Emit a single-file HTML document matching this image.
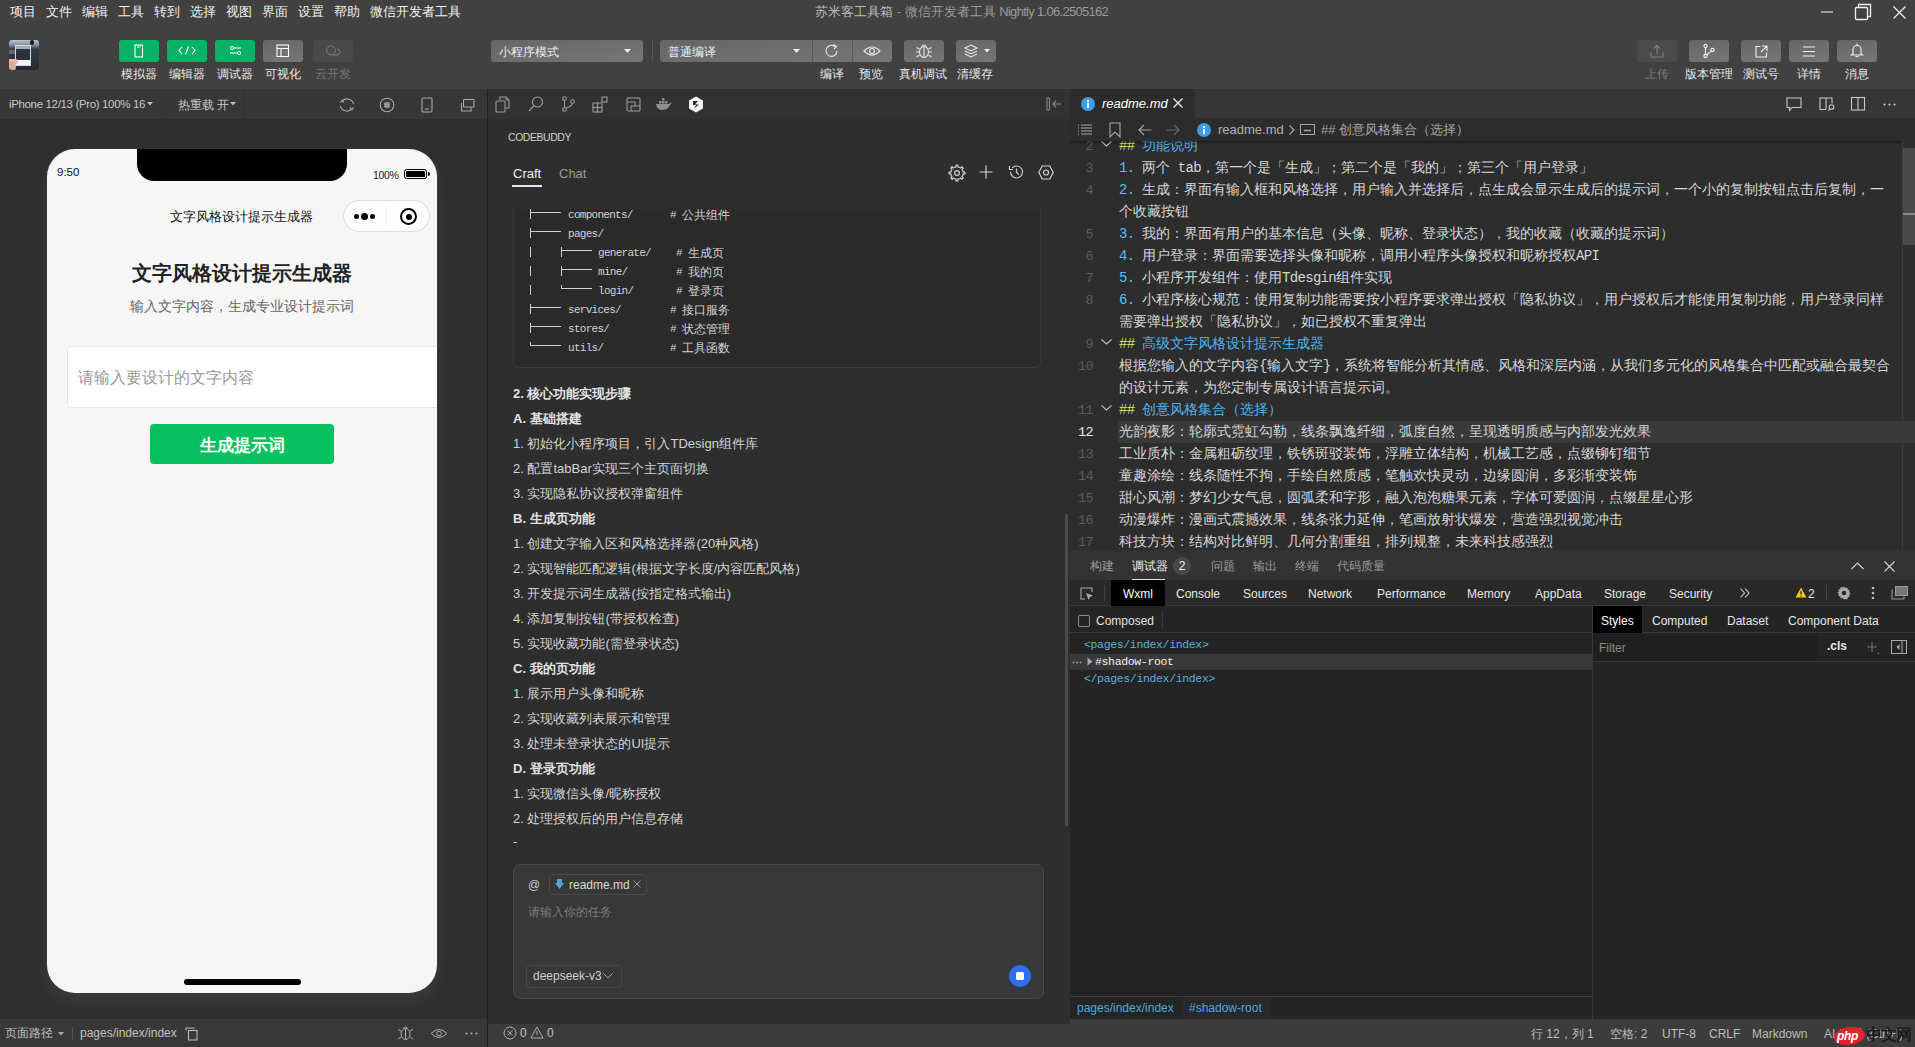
<!DOCTYPE html>
<html><head><meta charset="utf-8">
<style>
*{box-sizing:border-box;margin:0;padding:0}
html,body{width:1915px;height:1047px;overflow:hidden;background:#2e2e2e;font-family:"Liberation Sans",sans-serif;color:#ccc}
.a{position:absolute}
.t{position:absolute;white-space:pre;line-height:1}
svg{position:absolute;overflow:visible}
/* regions */
#top{left:0;top:0;width:1915px;height:89px;background:#414141}
#simbar{left:0;top:89px;width:487px;height:30px;background:#373737}
#sim{left:0;top:119px;width:487px;height:900px;background:#2f2f2f}
#simfoot{left:0;top:1019px;width:487px;height:28px;background:#383838}
#vdiv1{left:487px;top:89px;width:1px;height:958px;background:#1e1e1e}
#cb{left:488px;top:89px;width:582px;height:935px;background:#2e2e2e}
#cbicons{left:488px;top:89px;width:582px;height:30px;background:#323232}
#cbstatus{left:488px;top:1024px;width:582px;height:23px;background:#3b3b3b}
#edtabs{left:1070px;top:89px;width:845px;height:29px;background:#363636}
#edcrumb{left:1070px;top:118px;width:845px;height:23px;background:#2c2c2c}
#ed{left:1070px;top:141px;width:845px;height:409px;background:#2d2d2d}
#dbhead{left:1070px;top:550px;width:845px;height:30px;background:#333}
#dt{left:1070px;top:580px;width:845px;height:439px;background:#242424}
#status{left:1070px;top:1019px;width:845px;height:28px;background:#3c3c3c}
</style></head><body>
<div class="a" id="top"></div>
<div class="a" id="simbar"></div>
<div class="a" id="sim"></div>
<div class="a" id="simfoot"></div>
<div class="a" id="cb"></div>
<div class="a" id="cbicons"></div>
<div class="a" id="cbstatus"></div>
<div class="a" id="vdiv1"></div>
<div class="a" id="edtabs"></div>
<div class="a" id="edcrumb"></div>
<div class="a" id="ed"></div>
<div class="a" id="dbhead"></div>
<div class="a" id="dt"></div>
<div class="a" id="status"></div>
<!-- menu -->
<div class="t" style="left:10px;top:5px;font-size:13px;color:#f0f0f0;word-spacing:0">项目</div>
<div class="t" style="left:46px;top:5px;font-size:13px;color:#f0f0f0">文件</div>
<div class="t" style="left:82px;top:5px;font-size:13px;color:#f0f0f0">编辑</div>
<div class="t" style="left:118px;top:5px;font-size:13px;color:#f0f0f0">工具</div>
<div class="t" style="left:154px;top:5px;font-size:13px;color:#f0f0f0">转到</div>
<div class="t" style="left:190px;top:5px;font-size:13px;color:#f0f0f0">选择</div>
<div class="t" style="left:226px;top:5px;font-size:13px;color:#f0f0f0">视图</div>
<div class="t" style="left:262px;top:5px;font-size:13px;color:#f0f0f0">界面</div>
<div class="t" style="left:298px;top:5px;font-size:13px;color:#f0f0f0">设置</div>
<div class="t" style="left:334px;top:5px;font-size:13px;color:#f0f0f0">帮助</div>
<div class="t" style="left:370px;top:5px;font-size:13px;color:#f0f0f0">微信开发者工具</div>
<div class="t" style="left:815px;top:5px;font-size:13px;color:#bdbdbd">苏米客工具箱 <span style="color:#8f8f8f">-</span> <span style="color:#9a9a9a">微信开发者工具 <span style="letter-spacing:-0.7px">Nightly 1.06.2505162</span></span></div>
<!-- window controls -->
<svg style="left:1821px;top:5px" width="14" height="14"><line x1="0" y1="7" x2="12" y2="7" stroke="#ddd" stroke-width="1.2"/></svg>
<svg style="left:1855px;top:4px" width="17" height="17"><rect x="0.5" y="3.5" width="12" height="12" fill="none" stroke="#eee" stroke-width="1.3" rx="1"/><path d="M3.5 3.5V0.5H15.5V12.5H12.5" fill="none" stroke="#eee" stroke-width="1.3"/></svg>
<svg style="left:1893px;top:6px" width="13" height="13"><path d="M0.5 0.5L12.5 12.5M12.5 0.5L0.5 12.5" stroke="#eee" stroke-width="1.3"/></svg>
<!-- avatar -->
<div class="a" style="left:9px;top:40px;width:30px;height:30px;border-radius:3px;overflow:hidden;background:linear-gradient(#b8c5d2 0%,#8592a0 16%,#343b48 30%,#242834 100%)">
 <div class="a" style="left:0;top:10px;width:7px;height:4px;background:#5e6976"></div>
 <div class="a" style="left:21px;top:0px;width:4px;height:5px;border-radius:2px;background:#1a1a1a"></div>
 <div class="a" style="left:6px;top:5px;width:16px;height:21px;background:#d6d8da"></div>
 <div class="a" style="left:7px;top:6px;width:14px;height:3px;background:#a3aebb"></div>
 <div class="a" style="left:7px;top:9px;width:14px;height:11px;background:#2a303c"></div>
 <div class="a" style="left:7px;top:20px;width:14px;height:5px;background:#f2f2f2"></div>
 <div class="a" style="left:-2px;top:19px;width:11px;height:5px;border-radius:3px;background:#e8b8ae"></div><div class="a" style="left:-2px;top:22px;width:9px;height:9px;border-radius:4px;background:#dba89e"></div>
</div>
<!-- green buttons -->
<div class="a" style="left:119px;top:40px;width:40px;height:22px;border-radius:3px;background:#07b266"></div>
<div class="a" style="left:167px;top:40px;width:40px;height:22px;border-radius:3px;background:#07b266"></div>
<div class="a" style="left:215px;top:40px;width:40px;height:22px;border-radius:3px;background:#07b266"></div>
<div class="a" style="left:263px;top:40px;width:40px;height:22px;border-radius:3px;background:linear-gradient(170deg,#666 0%,#767676 100%)"></div>
<div class="a" style="left:313px;top:40px;width:40px;height:22px;border-radius:3px;background:#4a4a4a"></div>
<svg style="left:134px;top:44px" width="10" height="14"><rect x="1" y="1" width="7.5" height="12" fill="none" stroke="#fff" stroke-width="1.1"/><line x1="3" y1="3" x2="6.5" y2="3" stroke="#fff" stroke-width="1"/></svg>
<svg style="left:178px;top:45px" width="18" height="12"><path d="M4 2L1 5.5L4 9M14 2L17 5.5L14 9M10.5 1.5L7.5 9.5" fill="none" stroke="#fff" stroke-width="1.1"/></svg>
<svg style="left:229px;top:45px" width="13" height="12"><line x1="2" y1="3" x2="12" y2="3" stroke="#fff" stroke-width="1"/><circle cx="3" cy="3" r="1.6" fill="#07b266" stroke="#fff" stroke-width="1"/><line x1="1" y1="8" x2="11" y2="8" stroke="#fff" stroke-width="1"/><circle cx="10" cy="8" r="1.6" fill="#07b266" stroke="#fff" stroke-width="1"/></svg>
<svg style="left:276px;top:44px" width="14" height="14"><rect x="1" y="1" width="11.5" height="11.5" fill="none" stroke="#fff" stroke-width="1.1"/><line x1="1" y1="4.5" x2="12.5" y2="4.5" stroke="#fff" stroke-width="1.1"/><line x1="5" y1="4.5" x2="5" y2="12.5" stroke="#fff" stroke-width="1.1"/></svg>
<svg style="left:325px;top:45px" width="16" height="12"><circle cx="6" cy="5.5" r="4.5" fill="none" stroke="#7a7a7a" stroke-width="1"/><path d="M7 10h5a3 3 0 0 0 0-6" fill="none" stroke="#7a7a7a" stroke-width="1"/></svg>
<div class="t" style="left:121px;top:68px;font-size:12px;color:#e6e6e6">模拟器</div>
<div class="t" style="left:169px;top:68px;font-size:12px;color:#e6e6e6">编辑器</div>
<div class="t" style="left:217px;top:68px;font-size:12px;color:#e6e6e6">调试器</div>
<div class="t" style="left:265px;top:68px;font-size:12px;color:#e6e6e6">可视化</div>
<div class="t" style="left:315px;top:68px;font-size:12px;color:#777">云开发</div>
<!-- mode dropdowns -->
<div class="a" style="left:491px;top:40px;width:152px;height:22px;border-radius:3px;background:linear-gradient(170deg,#666 0%,#767676 100%)"></div>
<div class="t" style="left:499px;top:46px;font-size:12px;color:#eee">小程序模式</div>
<svg style="left:624px;top:49px" width="7" height="4"><path d="M0 0H7L3.5 4Z" fill="#eee"/></svg>
<div class="a" style="left:652px;top:40px;width:1px;height:22px;background:#555"></div>
<div class="a" style="left:660px;top:40px;width:232px;height:22px;border-radius:3px;background:linear-gradient(170deg,#666 0%,#767676 100%)"></div>
<div class="a" style="left:812px;top:40px;width:1px;height:22px;background:#5a5a5a"></div>
<div class="a" style="left:852px;top:40px;width:1px;height:22px;background:#5a5a5a"></div>
<div class="t" style="left:668px;top:46px;font-size:12px;color:#eee">普通编译</div>
<svg style="left:793px;top:49px" width="7" height="4"><path d="M0 0H7L3.5 4Z" fill="#eee"/></svg>
<svg style="left:824px;top:43px" width="16" height="16"><path d="M13 8A5.5 5.5 0 1 1 11 3.6" fill="none" stroke="#e8e8e8" stroke-width="1.1"/><path d="M9.5 1.5L12.5 3.5L10 6" fill="none" stroke="#e8e8e8" stroke-width="1.1"/></svg>
<svg style="left:863px;top:45px" width="18" height="12"><path d="M1 6Q9 -2 17 6Q9 14 1 6Z" fill="none" stroke="#e8e8e8" stroke-width="1.1"/><circle cx="9" cy="6" r="2.5" fill="none" stroke="#e8e8e8" stroke-width="1.1"/></svg>
<div class="a" style="left:904px;top:40px;width:40px;height:22px;border-radius:3px;background:linear-gradient(170deg,#666 0%,#767676 100%)"></div>
<svg style="left:915px;top:43px" width="18" height="16"><ellipse cx="9" cy="9" rx="4.5" ry="5.5" fill="none" stroke="#e8e8e8" stroke-width="1.1"/><line x1="9" y1="4" x2="9" y2="14.5" stroke="#e8e8e8" stroke-width="1.1"/><path d="M6.5 3.5Q9 0.5 11.5 3.5M4.5 6L1.5 4.5M13.5 6L16.5 4.5M4.5 9H1M13.5 9H17M4.5 12L1.5 14M13.5 12L16.5 14" fill="none" stroke="#e8e8e8" stroke-width="1.1"/></svg>
<div class="a" style="left:956px;top:40px;width:40px;height:22px;border-radius:3px;background:linear-gradient(170deg,#666 0%,#767676 100%)"></div>
<svg style="left:964px;top:44px" width="16" height="14"><path d="M7 1L13 4L7 7L1 4Z M1 7L7 10L13 7 M1 10L7 13L13 10" fill="none" stroke="#e8e8e8" stroke-width="1.1"/></svg>
<svg style="left:984px;top:49px" width="6" height="4"><path d="M0 0H6L3 3.5Z" fill="#eee"/></svg>
<div class="t" style="left:820px;top:68px;font-size:12px;color:#e6e6e6">编译</div>
<div class="t" style="left:859px;top:68px;font-size:12px;color:#e6e6e6">预览</div>
<div class="t" style="left:899px;top:68px;font-size:12px;color:#e6e6e6">真机调试</div>
<div class="t" style="left:957px;top:68px;font-size:12px;color:#e6e6e6">清缓存</div>
<!-- right buttons -->
<div class="a" style="left:1637px;top:40px;width:40px;height:22px;border-radius:3px;background:#4b4b4b"></div>
<div class="a" style="left:1689px;top:40px;width:40px;height:22px;border-radius:3px;background:linear-gradient(170deg,#666 0%,#767676 100%)"></div>
<div class="a" style="left:1741px;top:40px;width:40px;height:22px;border-radius:3px;background:linear-gradient(170deg,#666 0%,#767676 100%)"></div>
<div class="a" style="left:1789px;top:40px;width:40px;height:22px;border-radius:3px;background:linear-gradient(170deg,#666 0%,#767676 100%)"></div>
<div class="a" style="left:1837px;top:40px;width:40px;height:22px;border-radius:3px;background:linear-gradient(170deg,#666 0%,#767676 100%)"></div>
<svg style="left:1650px;top:44px" width="14" height="14"><path d="M1 8V13H13V8M7 10V1.5M4 4.5L7 1.5L10 4.5" fill="none" stroke="#7d7d7d" stroke-width="1.1"/></svg>
<svg style="left:1703px;top:44px" width="12" height="14"><circle cx="2.5" cy="2" r="1.6" fill="none" stroke="#f0f0f0" stroke-width="1.1"/><circle cx="2.5" cy="12" r="1.6" fill="none" stroke="#f0f0f0" stroke-width="1.1"/><circle cx="9.5" cy="6" r="1.6" fill="none" stroke="#f0f0f0" stroke-width="1.1"/><path d="M2.5 3.6V10.4M8.2 7L3.8 11" fill="none" stroke="#f0f0f0" stroke-width="1.1"/></svg>
<svg style="left:1755px;top:45px" width="13" height="13"><path d="M5.5 1.5H1V12H11.5V7.5M7 1H12V6M12 1L6 7" fill="none" stroke="#f0f0f0" stroke-width="1.1"/></svg>
<svg style="left:1803px;top:46px" width="12" height="11"><path d="M0 1H12M0 5.5H12M0 10H12" stroke="#f0f0f0" stroke-width="1.1"/></svg>
<svg style="left:1851px;top:43px" width="12" height="15"><path d="M2 11V6.5A4 4 0 0 1 10 6.5V11L11.5 12H0.5Z" fill="none" stroke="#f0f0f0" stroke-width="1.1"/><path d="M6 0.5V2.5M4.5 13.5H7.5" stroke="#f0f0f0" stroke-width="1.2"/></svg>
<div class="t" style="left:1645px;top:68px;font-size:12px;color:#7a7a7a">上传</div>
<div class="t" style="left:1685px;top:68px;font-size:12px;color:#e6e6e6">版本管理</div>
<div class="t" style="left:1743px;top:68px;font-size:12px;color:#e6e6e6">测试号</div>
<div class="t" style="left:1797px;top:68px;font-size:12px;color:#e6e6e6">详情</div>
<div class="t" style="left:1845px;top:68px;font-size:12px;color:#e6e6e6">消息</div>

<!-- sim toolbar -->
<div class="t" style="left:9px;top:99px;font-size:11.5px;letter-spacing:-0.35px;color:#c8c8c8">iPhone 12/13 (Pro) 100% 16</div>
<svg style="left:147px;top:102px" width="6" height="4"><path d="M0 0H6L3 3.5Z" fill="#bbb"/></svg>
<div class="a" style="left:166px;top:89px;width:1px;height:30px;background:#333"></div>
<div class="t" style="left:178px;top:99px;font-size:12px;color:#c8c8c8">热重载<span style="margin-left:3px;font-size:11.5px">开</span></div>
<svg style="left:230px;top:102px" width="6" height="4"><path d="M0 0H6L3 3.5Z" fill="#bbb"/></svg>
<div class="a" style="left:244px;top:89px;width:1px;height:30px;background:#333"></div>
<svg style="left:339px;top:97px" width="16" height="16"><path d="M3.2 4.2A6.6 6.6 0 0 1 14.6 7.2M12.8 11.8A6.6 6.6 0 0 1 1.4 8.8" fill="none" stroke="#aaa" stroke-width="1.1"/><path d="M1.5 5.8L3.2 3.2L5 5.6M14.5 10.2L12.8 12.8L11 10.4" fill="none" stroke="#aaa" stroke-width="1.1"/></svg>
<svg style="left:379px;top:97px" width="16" height="16"><circle cx="8" cy="8" r="6.8" fill="none" stroke="#aaa" stroke-width="1.1"/><rect x="5.2" y="5.2" width="5.6" height="5.6" rx="0.8" fill="#999"/></svg>
<svg style="left:421px;top:97px" width="12" height="16"><rect x="1" y="1" width="10" height="14" rx="1.2" fill="none" stroke="#aaa" stroke-width="1.1"/><line x1="4" y1="12" x2="8" y2="12" stroke="#aaa" stroke-width="1.1"/></svg>
<svg style="left:459px;top:98px" width="17" height="14"><rect x="4.5" y="1.5" width="10.5" height="7.5" rx="0.5" fill="none" stroke="#aaa" stroke-width="1.1"/><path d="M2.5 5V13H12V9.5" fill="none" stroke="#aaa" stroke-width="1.1"/></svg>
<!-- phone -->
<div class="a" style="left:47px;top:149px;width:390px;height:844px;background:#f6f6f6;border-radius:28px;box-shadow:0 0 2px rgba(255,255,255,0.1),0 9px 16px rgba(255,255,255,0.06);overflow:hidden">
  <div class="a" style="left:90px;top:0;width:210px;height:32px;background:#000;border-radius:0 0 17px 17px"></div>
  <div class="t" style="left:10px;top:18px;font-size:11.5px;color:#111">9:50</div>
  <div class="t" style="left:326px;top:21px;font-size:10.5px;color:#222;letter-spacing:-0.3px">100%</div>
  <div class="a" style="left:357px;top:20px;width:23px;height:10px;border:1.2px solid #000;border-radius:2.5px;padding:1px"><div style="width:100%;height:100%;background:#000;border-radius:1px"></div></div>
  <div class="a" style="left:381px;top:23px;width:2px;height:4px;background:#000;border-radius:0 2px 2px 0"></div>
  <!-- nav -->
  <div class="t" style="left:123px;top:61px;font-size:13px;color:#111">文字风格设计提示生成器</div>
  <div class="a" style="left:296px;top:51px;width:87px;height:32px;border:1px solid #dcdcdc;border-radius:16px;background:#fdfdfd"></div>
  <div class="a" style="left:339px;top:58px;width:1px;height:18px;background:#eee"></div>
  <div class="a" style="left:307px;top:65px;width:5px;height:5px;border-radius:50%;background:#000"></div>
  <div class="a" style="left:314px;top:64px;width:7px;height:7px;border-radius:50%;background:#000"></div>
  <div class="a" style="left:323px;top:65px;width:5px;height:5px;border-radius:50%;background:#000"></div>
  <div class="a" style="left:353px;top:59px;width:17px;height:17px;border-radius:50%;border:2.2px solid #000"></div>
  <div class="a" style="left:358.5px;top:64.5px;width:6px;height:6px;border-radius:50%;background:#000"></div>
  <!-- content -->
  <div class="t" style="left:0;width:390px;text-align:center;top:114px;font-size:20px;font-weight:bold;color:#222">文字风格设计提示生成器</div>
  <div class="t" style="left:0;width:390px;text-align:center;top:150px;font-size:14px;color:#666">输入文字内容，生成专业设计提示词</div>
  <div class="a" style="left:20px;top:197px;width:400px;height:62px;background:#fff;border:1px solid #e6e6e6;border-radius:4px"></div>
  <div class="t" style="left:31px;top:221px;font-size:16px;color:#999">请输入要设计的文字内容</div>
  <div class="a" style="left:103px;top:275px;width:184px;height:40px;background:#07c160;border-radius:4px"></div>
  <div class="t" style="left:103px;width:184px;text-align:center;top:288px;font-size:17px;font-weight:bold;color:#fff">生成提示词</div>
  <div class="a" style="left:137px;top:830px;width:117px;height:6px;background:#000;border-radius:3px"></div>
</div>
<!-- sim footer -->
<div class="t" style="left:5px;top:1027px;font-size:12px;color:#c0c0c0">页面路径</div>
<svg style="left:58px;top:1032px" width="6" height="4"><path d="M0 0H6L3 3.5Z" fill="#aaa"/></svg>
<div class="a" style="left:72px;top:1027px;width:1px;height:13px;background:#555"></div>
<div class="t" style="left:80px;top:1027px;font-size:12px;color:#c0c0c0">pages/index/index</div>
<svg style="left:185px;top:1027px" width="13" height="14"><path d="M1 3.5V1H9.5" fill="none" stroke="#bbb" stroke-width="1.1"/><rect x="3.5" y="3.5" width="8.5" height="9.5" fill="none" stroke="#bbb" stroke-width="1.1"/></svg>
<svg style="left:397px;top:1025px" width="17" height="16"><ellipse cx="8.5" cy="9" rx="4.5" ry="5.5" fill="none" stroke="#aaa" stroke-width="1"/><line x1="8.5" y1="4" x2="8.5" y2="14.5" stroke="#aaa" stroke-width="1"/><path d="M6 3.5Q8.5 0.5 11 3.5M4 6L1 4.5M13 6L16 4.5M4 12L1 14M13 12L16 14" fill="none" stroke="#aaa" stroke-width="1"/></svg>
<svg style="left:430px;top:1028px" width="18" height="11"><path d="M1 5.5Q9 -2.5 17 5.5Q9 13.5 1 5.5Z" fill="none" stroke="#aaa" stroke-width="1"/><circle cx="9" cy="5.5" r="2.3" fill="none" stroke="#aaa" stroke-width="1"/></svg>
<svg style="left:465px;top:1032px" width="14" height="4"><circle cx="1.5" cy="1.5" r="1.1" fill="#aaa"/><circle cx="6.5" cy="1.5" r="1.1" fill="#aaa"/><circle cx="11.5" cy="1.5" r="1.1" fill="#aaa"/></svg>

<!-- activity icons -->
<svg style="left:495px;top:96px" width="16" height="17"><path d="M5 4V1H11L14 4V12H10" fill="none" stroke="#9a9a9a" stroke-width="1.1"/><path d="M11 1V4H14" fill="none" stroke="#9a9a9a" stroke-width="1"/><rect x="1" y="5" width="9" height="11" rx="1" fill="none" stroke="#9a9a9a" stroke-width="1.1"/></svg>
<svg style="left:528px;top:96px" width="16" height="16"><circle cx="9.5" cy="6" r="5" fill="none" stroke="#9a9a9a" stroke-width="1.1"/><line x1="6" y1="9.5" x2="1" y2="15" stroke="#9a9a9a" stroke-width="1.2"/></svg>
<svg style="left:561px;top:96px" width="15" height="16"><circle cx="3.5" cy="2.5" r="1.8" fill="none" stroke="#9a9a9a" stroke-width="1.1"/><circle cx="3.5" cy="13.5" r="1.8" fill="none" stroke="#9a9a9a" stroke-width="1.1"/><circle cx="11.5" cy="5.5" r="1.8" fill="none" stroke="#9a9a9a" stroke-width="1.1"/><path d="M3.5 4.3V11.7M11.5 7.3Q11 10 5 12" fill="none" stroke="#9a9a9a" stroke-width="1.1"/></svg>
<svg style="left:592px;top:96px" width="17" height="17"><rect x="1" y="7" width="4.5" height="4.5" fill="none" stroke="#9a9a9a" stroke-width="1.1"/><rect x="5.5" y="7" width="4.5" height="4.5" fill="none" stroke="#9a9a9a" stroke-width="1.1"/><rect x="1" y="11.5" width="4.5" height="4.5" fill="none" stroke="#9a9a9a" stroke-width="1.1"/><rect x="5.5" y="11.5" width="4.5" height="4.5" fill="none" stroke="#9a9a9a" stroke-width="1.1"/><rect x="10" y="1" width="5" height="5" fill="none" stroke="#9a9a9a" stroke-width="1.1"/></svg>
<svg style="left:626px;top:97px" width="15" height="15"><rect x="1" y="1" width="13" height="13" rx="1" fill="none" stroke="#9a9a9a" stroke-width="1.1"/><path d="M1 5H9V9H14M5 14V9H9" fill="none" stroke="#9a9a9a" stroke-width="1.1"/></svg>
<svg style="left:655px;top:97px" width="18" height="14"><path d="M1 7H14Q15.5 5 17 6Q15.5 7 15 8Q13 13 7 13Q2 13 1 7Z" fill="#8f8f8f"/><rect x="4" y="4" width="2.5" height="2.5" fill="#8f8f8f"/><rect x="7" y="4" width="2.5" height="2.5" fill="#8f8f8f"/><rect x="10" y="4" width="2.5" height="2.5" fill="#8f8f8f"/><rect x="7" y="1" width="2.5" height="2.5" fill="#8f8f8f"/></svg>
<svg style="left:688px;top:96px" width="16" height="17"><path d="M8 0.5L15 4.5V12.5L8 16.5L1 12.5V4.5Z" fill="#f2f2f2"/><path d="M5 5H10L7 8.5H11L6 12.5L8 9H5Z" fill="#2c2c2c"/></svg>
<svg style="left:1046px;top:97px" width="16" height="14"><rect x="1" y="1" width="2.5" height="12" fill="none" stroke="#8a8a8a" stroke-width="1"/><path d="M15 7H7M10 4L7 7L10 10" fill="none" stroke="#8a8a8a" stroke-width="1.2"/></svg>
<!-- header -->
<div class="t" style="left:508px;top:132px;font-size:10.5px;letter-spacing:-0.45px;color:#cfcfcf">CODEBUDDY</div>
<div class="t" style="left:513px;top:167px;font-size:13px;color:#f0f0f0">Craft</div>
<div class="a" style="left:512px;top:185px;width:30px;height:2px;background:#e8e8e8"></div>
<div class="t" style="left:559px;top:167px;font-size:13px;color:#9a9a9a">Chat</div>
<svg style="left:948px;top:164px" width="18" height="18"><path d="M14.93 7.18 L15.13 8.08 L16.94 8.05 L16.94 9.95 L15.13 9.92 L14.93 10.82 L14.48 11.90 L13.99 12.68 L15.29 13.94 L13.94 15.29 L12.68 13.99 L11.90 14.48 L10.82 14.93 L9.92 15.13 L9.95 16.94 L8.05 16.94 L8.08 15.13 L7.18 14.93 L6.10 14.48 L5.32 13.99 L4.06 15.29 L2.71 13.94 L4.01 12.68 L3.52 11.90 L3.07 10.82 L2.87 9.92 L1.06 9.95 L1.06 8.05 L2.87 8.08 L3.07 7.18 L3.52 6.10 L4.01 5.32 L2.71 4.06 L4.06 2.71 L5.32 4.01 L6.10 3.52 L7.18 3.07 L8.08 2.87 L8.05 1.06 L9.95 1.06 L9.92 2.87 L10.82 3.07 L11.90 3.52 L12.68 4.01 L13.94 2.71 L15.29 4.06 L13.99 5.32 L14.48 6.10Z" fill="none" stroke="#d0d0d0" stroke-width="1.2" stroke-linejoin="round"/><circle cx="9" cy="9" r="2.4" fill="none" stroke="#d0d0d0" stroke-width="1.2"/></svg>
<svg style="left:979px;top:165px" width="14" height="14"><path d="M7 0.5V13.5M0.5 7H13.5" stroke="#d0d0d0" stroke-width="1.2"/></svg>
<svg style="left:1008px;top:164px" width="16" height="16"><path d="M2.5 8A6 6 0 1 0 4.2 3.8" fill="none" stroke="#c8c8c8" stroke-width="1.2"/><path d="M1.5 2V5.5H5" fill="none" stroke="#c8c8c8" stroke-width="1.2"/><path d="M8.5 4.5V8.5L11 10.5" fill="none" stroke="#c8c8c8" stroke-width="1.2"/></svg>
<svg style="left:1038px;top:165px" width="16" height="15"><path d="M4.2 1H11.8L15.2 7.5L11.8 14H4.2L0.8 7.5Z" fill="none" stroke="#d0d0d0" stroke-width="1.2"/><circle cx="8" cy="7.5" r="2.5" fill="none" stroke="#d0d0d0" stroke-width="1.2"/></svg>
<!-- code block -->
<div class="a" style="left:513px;top:205px;width:528px;height:163px;background:#2a2a2a;border:1px solid #383838;border-top:none;border-radius:0 0 6px 6px"></div>
<div class="a" style="left:488px;top:196px;width:576px;height:13px;background:#2e2e2e"></div>
<div style="position:absolute;left:0;top:0;font-family:'Liberation Mono',monospace;font-size:11px;color:#d2d2d2">
<div class="a" style="left:530px;top:209px;width:1px;height:10px;background:#cfcfcf"></div>
<div class="a" style="left:530px;top:212px;width:31px;height:1px;background:#cfcfcf"></div>
<div class="t" style="left:568px;top:210px;letter-spacing:-0.72px">components/</div>
<div class="t" style="left:670px;top:210px">#</div>
<div class="t" style="left:682px;top:210px;font-family:'Liberation Sans',sans-serif;font-size:11.5px">公共组件</div>
<div class="a" style="left:530px;top:228px;width:1px;height:10px;background:#cfcfcf"></div>
<div class="a" style="left:530px;top:231px;width:31px;height:1px;background:#cfcfcf"></div>
<div class="t" style="left:568px;top:229px;letter-spacing:-0.72px">pages/</div>
<div class="a" style="left:530px;top:247px;width:1px;height:10px;background:#cfcfcf"></div>
<div class="a" style="left:561px;top:247px;width:1px;height:10px;background:#cfcfcf"></div>
<div class="a" style="left:561px;top:250px;width:31px;height:1px;background:#cfcfcf"></div>
<div class="t" style="left:598px;top:248px;letter-spacing:-0.72px">generate/</div>
<div class="t" style="left:676px;top:248px">#</div>
<div class="t" style="left:688px;top:248px;font-family:'Liberation Sans',sans-serif;font-size:11.5px">生成页</div>
<div class="a" style="left:530px;top:266px;width:1px;height:10px;background:#cfcfcf"></div>
<div class="a" style="left:561px;top:266px;width:1px;height:10px;background:#cfcfcf"></div>
<div class="a" style="left:561px;top:269px;width:31px;height:1px;background:#cfcfcf"></div>
<div class="t" style="left:598px;top:267px;letter-spacing:-0.72px">mine/</div>
<div class="t" style="left:676px;top:267px">#</div>
<div class="t" style="left:688px;top:267px;font-family:'Liberation Sans',sans-serif;font-size:11.5px">我的页</div>
<div class="a" style="left:530px;top:285px;width:1px;height:10px;background:#cfcfcf"></div>
<div class="a" style="left:561px;top:285px;width:1px;height:4px;background:#cfcfcf"></div>
<div class="a" style="left:561px;top:288px;width:31px;height:1px;background:#cfcfcf"></div>
<div class="t" style="left:598px;top:286px;letter-spacing:-0.72px">login/</div>
<div class="t" style="left:676px;top:286px">#</div>
<div class="t" style="left:688px;top:286px;font-family:'Liberation Sans',sans-serif;font-size:11.5px">登录页</div>
<div class="a" style="left:530px;top:304px;width:1px;height:10px;background:#cfcfcf"></div>
<div class="a" style="left:530px;top:307px;width:31px;height:1px;background:#cfcfcf"></div>
<div class="t" style="left:568px;top:305px;letter-spacing:-0.72px">services/</div>
<div class="t" style="left:670px;top:305px">#</div>
<div class="t" style="left:682px;top:305px;font-family:'Liberation Sans',sans-serif;font-size:11.5px">接口服务</div>
<div class="a" style="left:530px;top:323px;width:1px;height:10px;background:#cfcfcf"></div>
<div class="a" style="left:530px;top:326px;width:31px;height:1px;background:#cfcfcf"></div>
<div class="t" style="left:568px;top:324px;letter-spacing:-0.72px">stores/</div>
<div class="t" style="left:670px;top:324px">#</div>
<div class="t" style="left:682px;top:324px;font-family:'Liberation Sans',sans-serif;font-size:11.5px">状态管理</div>
<div class="a" style="left:530px;top:342px;width:1px;height:4px;background:#cfcfcf"></div>
<div class="a" style="left:530px;top:345px;width:31px;height:1px;background:#cfcfcf"></div>
<div class="t" style="left:568px;top:343px;letter-spacing:-0.72px">utils/</div>
<div class="t" style="left:670px;top:343px">#</div>
<div class="t" style="left:682px;top:343px;font-family:'Liberation Sans',sans-serif;font-size:11.5px">工具函数</div>
</div>
<!-- markdown -->
<div style="position:absolute;left:0;top:1px;font-size:13px;color:#d4d4d4">
<div class="t" style="left:513px;top:386px;font-weight:bold;color:#e2e2e2">2. 核心功能实现步骤</div>
<div class="t" style="left:513px;top:411px;font-weight:bold;color:#e2e2e2">A. 基础搭建</div>
<div class="t" style="left:513px;top:436px">1. 初始化小程序项目，引入TDesign组件库</div>
<div class="t" style="left:513px;top:461px">2. 配置tabBar实现三个主页面切换</div>
<div class="t" style="left:513px;top:486px">3. 实现隐私协议授权弹窗组件</div>
<div class="t" style="left:513px;top:511px;font-weight:bold;color:#e2e2e2">B. 生成页功能</div>
<div class="t" style="left:513px;top:536px">1. 创建文字输入区和风格选择器(20种风格)</div>
<div class="t" style="left:513px;top:561px">2. 实现智能匹配逻辑(根据文字长度/内容匹配风格)</div>
<div class="t" style="left:513px;top:586px">3. 开发提示词生成器(按指定格式输出)</div>
<div class="t" style="left:513px;top:611px">4. 添加复制按钮(带授权检查)</div>
<div class="t" style="left:513px;top:636px">5. 实现收藏功能(需登录状态)</div>
<div class="t" style="left:513px;top:661px;font-weight:bold;color:#e2e2e2">C. 我的页功能</div>
<div class="t" style="left:513px;top:686px">1. 展示用户头像和昵称</div>
<div class="t" style="left:513px;top:711px">2. 实现收藏列表展示和管理</div>
<div class="t" style="left:513px;top:736px">3. 处理未登录状态的UI提示</div>
<div class="t" style="left:513px;top:761px;font-weight:bold;color:#e2e2e2">D. 登录页功能</div>
<div class="t" style="left:513px;top:786px">1. 实现微信头像/昵称授权</div>
<div class="t" style="left:513px;top:811px">2. 处理授权后的用户信息存储</div>
<div class="t" style="left:513px;top:834px">-</div>
</div>
<!-- scrollbar -->
<div class="a" style="left:1065px;top:514px;width:3px;height:312px;background:#4a4a4a"></div>
<!-- input box -->
<div class="a" style="left:513px;top:864px;width:531px;height:135px;background:#383838;border:1px solid #474747;border-radius:7px"></div>
<div class="t" style="left:528px;top:879px;font-size:12px;color:#c8c8c8">@</div>
<div class="a" style="left:549px;top:874px;width:98px;height:21px;border:1px solid #4a4a4a;border-radius:4px"></div>
<svg style="left:555px;top:879px" width="9" height="11"><path d="M2 0H7V4H9L4.5 10L0 4H2Z" fill="#4aa3df"/></svg>
<div class="t" style="left:569px;top:879px;font-size:12px;color:#d8d8d8">readme.md</div>
<svg style="left:633px;top:880px" width="8" height="8"><path d="M0.5 0.5L7.5 7.5M7.5 0.5L0.5 7.5" stroke="#999" stroke-width="1"/></svg>
<div class="t" style="left:528px;top:906px;font-size:12px;color:#7c7c7c">请输入你的任务</div>
<div class="a" style="left:526px;top:965px;width:96px;height:23px;border:1px solid #474747;border-radius:4px"></div>
<div class="t" style="left:533px;top:970px;font-size:12px;color:#cfcfcf">deepseek-v3</div>
<svg style="left:603px;top:973px" width="10" height="6"><path d="M0.5 0.5L5 5L9.5 0.5" fill="none" stroke="#aaa" stroke-width="1"/></svg>
<div class="a" style="left:1009px;top:965px;width:22px;height:22px;border-radius:50%;background:#2f6ff0"></div>
<div class="a" style="left:1016px;top:972px;width:8px;height:8px;border-radius:1.5px;background:#fff"></div>
<!-- status -->
<svg style="left:503px;top:1026px" width="14" height="14"><circle cx="7" cy="7" r="6" fill="none" stroke="#aaa" stroke-width="1"/><path d="M4.5 4.5L9.5 9.5M9.5 4.5L4.5 9.5" stroke="#aaa" stroke-width="1"/></svg>
<div class="t" style="left:520px;top:1027px;font-size:12px;color:#c0c0c0">0</div>
<svg style="left:530px;top:1026px" width="14" height="13"><path d="M7 1L13 12H1Z" fill="none" stroke="#aaa" stroke-width="1"/><path d="M7 5V9" stroke="#aaa" stroke-width="1"/></svg>
<div class="t" style="left:547px;top:1027px;font-size:12px;color:#c0c0c0">0</div>

<!-- editor tab -->
<div class="a" style="left:1070px;top:89px;width:125px;height:29px;background:#2c2c2c"></div>
<div class="a" style="left:1081px;top:97px;width:14px;height:14px;border-radius:50%;background:#3d9ee8"></div>
<div class="a" style="left:1087px;top:100px;width:2px;height:2px;background:#fff"></div>
<div class="a" style="left:1087px;top:103px;width:2px;height:5px;background:#fff"></div>
<div class="t" style="left:1102px;top:97px;font-size:13px;font-style:italic;color:#fff">readme.md</div>
<svg style="left:1173px;top:98px" width="10" height="10"><path d="M0.5 0.5L9.5 9.5M9.5 0.5L0.5 9.5" stroke="#eee" stroke-width="1.3"/></svg>
<!-- tab bar actions -->
<svg style="left:1786px;top:97px" width="16" height="15"><path d="M1 1H15V10.5H6L3.5 13.5V10.5H1Z" fill="none" stroke="#c8c8c8" stroke-width="1.1"/></svg>
<svg style="left:1819px;top:97px" width="17" height="15"><path d="M7 12.5H1V1H13V6.5" fill="none" stroke="#c8c8c8" stroke-width="1.1"/><line x1="7" y1="1" x2="7" y2="12.5" stroke="#c8c8c8" stroke-width="1.1"/><circle cx="12.5" cy="10" r="2.3" fill="none" stroke="#c8c8c8" stroke-width="1.1"/><line x1="11" y1="11.8" x2="9" y2="14" stroke="#c8c8c8" stroke-width="1.1"/></svg>
<svg style="left:1851px;top:97px" width="14" height="14"><rect x="0.5" y="0.5" width="13" height="12.5" fill="none" stroke="#c8c8c8" stroke-width="1.1"/><line x1="7" y1="0.5" x2="7" y2="13" stroke="#c8c8c8" stroke-width="1.1"/></svg>
<svg style="left:1883px;top:103px" width="14" height="3"><circle cx="1.5" cy="1.5" r="1.1" fill="#c8c8c8"/><circle cx="6.5" cy="1.5" r="1.1" fill="#c8c8c8"/><circle cx="11.5" cy="1.5" r="1.1" fill="#c8c8c8"/></svg>
<!-- breadcrumb -->
<svg style="left:1077px;top:123px" width="16" height="14"><path d="M4 2H15M4 5H15M4 8H15M4 11H15" stroke="#a8a8a8" stroke-width="1"/><path d="M1 2H2M1 5H2M1 8H2M1 11H2" stroke="#a8a8a8" stroke-width="1"/></svg>
<svg style="left:1109px;top:122px" width="12" height="16"><path d="M1 1H11V15L6 10L1 15Z" fill="none" stroke="#a8a8a8" stroke-width="1.1"/></svg>
<svg style="left:1138px;top:124px" width="14" height="12"><path d="M13.5 6H1M6 1L1 6L6 11" fill="none" stroke="#a8a8a8" stroke-width="1.1"/></svg>
<svg style="left:1166px;top:124px" width="14" height="12"><path d="M0.5 6H13M8 1L13 6L8 11" fill="none" stroke="#6a6a6a" stroke-width="1.1"/></svg>
<div class="a" style="left:1197px;top:123px;width:14px;height:14px;border-radius:50%;background:#3d9ee8"></div>
<div class="a" style="left:1203px;top:126px;width:2px;height:2px;background:#fff"></div>
<div class="a" style="left:1203px;top:129px;width:2px;height:5px;background:#fff"></div>
<div class="t" style="left:1218px;top:123px;font-size:13px;color:#b0b0b0">readme.md</div>
<svg style="left:1289px;top:125px" width="6" height="10"><path d="M0.5 0.5L5 5L0.5 9.5" fill="none" stroke="#b0b0b0" stroke-width="1.1"/></svg>
<svg style="left:1300px;top:124px" width="15" height="11"><rect x="0.5" y="0.5" width="14" height="10" fill="none" stroke="#a8a8a8" stroke-width="1"/><path d="M4 6.5H11" stroke="#a8a8a8" stroke-width="1.5"/></svg>
<div class="t" style="left:1321px;top:123px;font-size:13px;color:#a8a8a8">## 创意风格集合（选择）</div>
<!-- content -->
<div class="a" style="left:1070px;top:141px;width:832px;height:409px;overflow:hidden">
<style>
.ln{position:absolute;width:23px;text-align:right;left:0;padding-top:2px;font-family:"Liberation Mono",monospace;font-size:13.5px;letter-spacing:-0.6px;color:#5c5c5c;line-height:22px;height:22px}
.lc{position:absolute;left:49px;white-space:pre;font-size:14px;color:#d6d6d6;line-height:22px;height:22px}
.m{font-family:"Liberation Mono",monospace;letter-spacing:-0.7px}
.hh{color:#c6dc5f;font-family:"Liberation Mono",monospace;letter-spacing:-0.7px}
.hd{color:#4db4f0}
.nu{color:#4fc1f7;font-family:"Liberation Mono",monospace;letter-spacing:-0.7px}
</style>
<div class="a" style="left:48px;top:280px;width:784px;height:22px;background:#3a3a3a"></div>
<div class="ln" style="top:-7px">2</div><div class="lc" style="top:-7px"><span class="hh">## </span><span class="hd">功能说明</span></div>
<div class="ln" style="top:15px">3</div><div class="lc" style="top:15px"><span class="nu">1. </span>两个<span class="m"> tab</span>，第一个是「生成」；第二个是「我的」；第三个「用户登录」</div>
<div class="ln" style="top:37px">4</div><div class="lc" style="top:37px"><span class="nu">2. </span>生成：界面有输入框和风格选择，用户输入并选择后，点生成会显示生成后的提示词，一个小的复制按钮点击后复制，一</div>
<div class="lc" style="top:59px">个收藏按钮</div>
<div class="ln" style="top:81px">5</div><div class="lc" style="top:81px"><span class="nu">3. </span>我的：界面有用户的基本信息（头像、昵称、登录状态），我的收藏（收藏的提示词）</div>
<div class="ln" style="top:103px">6</div><div class="lc" style="top:103px"><span class="nu">4. </span>用户登录：界面需要选择头像和昵称，调用小程序头像授权和昵称授权<span class="m">API</span></div>
<div class="ln" style="top:125px">7</div><div class="lc" style="top:125px"><span class="nu">5. </span>小程序开发组件：使用<span class="m">Tdesgin</span>组件实现</div>
<div class="ln" style="top:147px">8</div><div class="lc" style="top:147px"><span class="nu">6. </span>小程序核心规范：使用复制功能需要按小程序要求弹出授权「隐私协议」，用户授权后才能使用复制功能，用户登录同样</div>
<div class="lc" style="top:169px">需要弹出授权「隐私协议」，如已授权不重复弹出</div>
<div class="ln" style="top:191px">9</div><div class="lc" style="top:191px"><span class="hh">## </span><span class="hd">高级文字风格设计提示生成器</span></div>
<div class="ln" style="top:213px">10</div><div class="lc" style="top:213px">根据您输入的文字内容<span class="m">{</span>输入文字<span class="m">}</span>，系统将智能分析其情感、风格和深层内涵，从我们多元化的风格集合中匹配或融合最契合</div>
<div class="lc" style="top:235px">的设计元素，为您定制专属设计语言提示词。</div>
<div class="ln" style="top:257px">11</div><div class="lc" style="top:257px"><span class="hh">## </span><span class="hd">创意风格集合（选择）</span></div>
<div class="ln" style="top:279px;color:#e8e8e8">12</div><div class="lc" style="top:279px">光韵夜影：轮廓式霓虹勾勒，线条飘逸纤细，弧度自然，呈现透明质感与内部发光效果</div>
<div class="ln" style="top:301px">13</div><div class="lc" style="top:301px">工业质朴：金属粗砺纹理，铁锈斑驳装饰，浮雕立体结构，机械工艺感，点缀铆钉细节</div>
<div class="ln" style="top:323px">14</div><div class="lc" style="top:323px">童趣涂绘：线条随性不拘，手绘自然质感，笔触欢快灵动，边缘圆润，多彩渐变装饰</div>
<div class="ln" style="top:345px">15</div><div class="lc" style="top:345px">甜心风潮：梦幻少女气息，圆弧柔和字形，融入泡泡糖果元素，字体可爱圆润，点缀星星心形</div>
<div class="ln" style="top:367px">16</div><div class="lc" style="top:367px">动漫爆炸：漫画式震撼效果，线条张力延伸，笔画放射状爆发，营造强烈视觉冲击</div>
<div class="ln" style="top:389px">17</div><div class="lc" style="top:389px">科技方块：结构对比鲜明、几何分割重组，排列规整，未来科技感强烈</div>
<svg style="left:31px;top:0px" width="11" height="6"><path d="M0.5 0.5L5.5 5L10.5 0.5" fill="none" stroke="#c0c0c0" stroke-width="1.1"/></svg>
<svg style="left:31px;top:198px" width="11" height="6"><path d="M0.5 0.5L5.5 5L10.5 0.5" fill="none" stroke="#c0c0c0" stroke-width="1.1"/></svg>
<svg style="left:31px;top:264px" width="11" height="6"><path d="M0.5 0.5L5.5 5L10.5 0.5" fill="none" stroke="#c0c0c0" stroke-width="1.1"/></svg>
</div>
<div class="a" style="left:1070px;top:141px;width:832px;height:4px;background:linear-gradient(rgba(0,0,0,0.35),rgba(0,0,0,0))"></div>
<!-- scrollbar -->
<div class="a" style="left:1902px;top:421px;width:13px;height:22px;background:#3a3a3a"></div>
<div class="a" style="left:1902px;top:141px;width:13px;height:409px;border-left:1px solid #3c3c3c"></div>
<div class="a" style="left:1903px;top:148px;width:12px;height:97px;background:#4a4a4a"></div>
<div class="a" style="left:1903px;top:213px;width:12px;height:2px;background:#8a8a8a"></div>

<!-- debugger header -->
<div class="t" style="left:1090px;top:560px;font-size:12px;color:#9a9a9a">构建</div>
<div class="t" style="left:1132px;top:560px;font-size:12px;color:#f0f0f0">调试器</div>
<div class="a" style="left:1173px;top:557px;width:18px;height:18px;border-radius:50%;background:#484848"></div>
<div class="t" style="left:1173px;top:560px;width:18px;text-align:center;font-size:12px;color:#eee">2</div>
<div class="a" style="left:1132px;top:579px;width:33px;height:2px;background:#e8e8e8"></div>
<div class="t" style="left:1211px;top:560px;font-size:12px;color:#9a9a9a">问题</div>
<div class="t" style="left:1253px;top:560px;font-size:12px;color:#9a9a9a">输出</div>
<div class="t" style="left:1295px;top:560px;font-size:12px;color:#9a9a9a">终端</div>
<div class="t" style="left:1337px;top:560px;font-size:12px;color:#9a9a9a">代码质量</div>
<svg style="left:1851px;top:562px" width="13" height="8"><path d="M0.5 7L6.5 1L12.5 7" fill="none" stroke="#d0d0d0" stroke-width="1.2"/></svg>
<svg style="left:1884px;top:561px" width="11" height="11"><path d="M0.5 0.5L10.5 10.5M10.5 0.5L0.5 10.5" stroke="#d0d0d0" stroke-width="1.2"/></svg>
<!-- devtools tabs -->
<div class="a" style="left:1070px;top:580px;width:845px;height:26px;background:#292929;border-bottom:1px solid #3a3a3a"></div>
<svg style="left:1080px;top:587px" width="14" height="14"><path d="M5 12H1V1H12V5" fill="none" stroke="#aaa" stroke-width="1.1"/><path d="M6 6L13 8.5L10 10L8.5 13Z" fill="#aaa"/></svg>
<div class="a" style="left:1104px;top:585px;width:1px;height:16px;background:#444"></div>
<div class="a" style="left:1111px;top:580px;width:54px;height:26px;background:#000"></div>
<div style="position:absolute;left:0;top:0;font-size:12px;color:#e6e6e6">
<div class="t" style="left:1123px;top:588px;color:#fff">Wxml</div>
<div class="t" style="left:1176px;top:588px">Console</div>
<div class="t" style="left:1243px;top:588px">Sources</div>
<div class="t" style="left:1308px;top:588px">Network</div>
<div class="t" style="left:1377px;top:588px">Performance</div>
<div class="t" style="left:1467px;top:588px">Memory</div>
<div class="t" style="left:1535px;top:588px">AppData</div>
<div class="t" style="left:1604px;top:588px">Storage</div>
<div class="t" style="left:1669px;top:588px">Security</div>
</div>
<svg style="left:1740px;top:588px" width="10" height="10"><path d="M0.5 0.5L4.5 5L0.5 9.5M5 0.5L9 5L5 9.5" fill="none" stroke="#ccc" stroke-width="1.1"/></svg>
<svg style="left:1795px;top:587px" width="12" height="11"><path d="M6 0.5L11.5 10.5H0.5Z" fill="#f5c518"/><path d="M6 4V7.5M6 8.5V9.5" stroke="#222" stroke-width="1.2"/></svg>
<div class="t" style="left:1808px;top:588px;font-size:12px;color:#e6e6e6">2</div>
<div class="a" style="left:1826px;top:585px;width:1px;height:16px;background:#444"></div>
<svg style="left:1836px;top:585px" width="16" height="16"><path d="M8 1.5l1.3 1.6 2-.5.4 2 2 .6-.6 1.9 1.4 1.4-1.4 1.4.6 1.9-2 .6-.4 2-2-.5L8 14.5l-1.3-1.6-2 .5-.4-2-2-.6.6-1.9L1.5 8l1.4-1.4-.6-1.9 2-.6.4-2 2 .5Z" fill="#aaa"/><circle cx="8" cy="8" r="2.3" fill="#292929"/></svg>
<svg style="left:1871px;top:586px" width="4" height="14"><circle cx="2" cy="2" r="1.3" fill="#bbb"/><circle cx="2" cy="7" r="1.3" fill="#bbb"/><circle cx="2" cy="12" r="1.3" fill="#bbb"/></svg>
<svg style="left:1891px;top:586px" width="17" height="14"><rect x="4.5" y="0.5" width="12" height="9" fill="#777" stroke="#999" stroke-width="1"/><path d="M1 3.5V13H13V10.5" fill="none" stroke="#999" stroke-width="1.1"/></svg>
<!-- composed row -->
<div class="a" style="left:1070px;top:606px;width:522px;height:27px;background:#242424;border-bottom:1px solid #3a3a3a"></div>
<div class="a" style="left:1078px;top:615px;width:12px;height:12px;border:1px solid #8a8a8a;border-radius:2px"></div>
<div class="t" style="left:1096px;top:615px;font-size:12px;color:#e0e0e0">Composed</div>
<div class="a" style="left:1162px;top:612px;width:1px;height:16px;background:#3a3a3a"></div>
<!-- styles pane -->
<div class="a" style="left:1592px;top:606px;width:1px;height:413px;background:#3a3a3a"></div>
<div class="a" style="left:1593px;top:606px;width:322px;height:27px;background:#242424;border-bottom:1px solid #3a3a3a"></div>
<div class="a" style="left:1593px;top:606px;width:49px;height:27px;background:#000"></div>
<div style="position:absolute;left:0;top:0;font-size:12px;color:#e6e6e6">
<div class="t" style="left:1601px;top:615px;color:#fff">Styles</div>
<div class="t" style="left:1652px;top:615px">Computed</div>
<div class="t" style="left:1727px;top:615px">Dataset</div>
<div class="t" style="left:1788px;top:615px">Component Data</div>
</div>
<div class="a" style="left:1593px;top:634px;width:224px;height:27px;background:#1f1f1f"></div>
<div class="a" style="left:1593px;top:661px;width:322px;height:1px;background:#3a3a3a"></div>
<div class="t" style="left:1599px;top:642px;font-size:12px;color:#8a8a8a">Filter</div>
<div class="t" style="left:1827px;top:640px;font-size:12px;font-weight:bold;color:#e6e6e6">.cls</div>
<svg style="left:1866px;top:641px" width="14" height="14"><path d="M6 1V11M1 6H11" stroke="#777" stroke-width="1.1"/><path d="M13 11V13H11Z" fill="#777"/></svg>
<svg style="left:1891px;top:640px" width="16" height="14"><rect x="0.5" y="0.5" width="15" height="13" fill="none" stroke="#aaa" stroke-width="1"/><line x1="11" y1="0.5" x2="11" y2="13.5" stroke="#aaa" stroke-width="1"/><path d="M8.5 4L5.5 7L8.5 10Z" fill="#aaa"/></svg>
<!-- dom tree -->
<div class="a" style="left:1070px;top:654px;width:522px;height:16px;background:#393939"></div>
<div style="position:absolute;left:0;top:0;font-family:'Liberation Mono',monospace;font-size:11.5px">
<div class="t" style="left:1084px;top:639px;color:#5db0d7;letter-spacing:-0.35px">&lt;pages/index/index&gt;</div>
<div class="t" style="left:1095px;top:656px;color:#f0f0f0;letter-spacing:-0.35px">#shadow-root</div>
<div class="t" style="left:1084px;top:673px;color:#5db0d7;letter-spacing:-0.35px">&lt;/pages/index/index&gt;</div>
</div>
<svg style="left:1072px;top:661px" width="11" height="3"><circle cx="1.5" cy="1.5" r="1" fill="#999"/><circle cx="5" cy="1.5" r="1" fill="#999"/><circle cx="8.5" cy="1.5" r="1" fill="#999"/></svg>
<svg style="left:1087px;top:657px" width="6" height="9"><path d="M0.5 0.5L5.5 4.5L0.5 8.5Z" fill="#aaa"/></svg>
<!-- bottom crumbs -->
<div class="a" style="left:1070px;top:996px;width:522px;height:1px;background:#3e3e3e"></div>
<div class="a" style="left:1182px;top:997px;width:89px;height:22px;background:#27292c"></div>
<div class="t" style="left:1077px;top:1002px;font-size:12px;color:#4ea8dc">pages/index/index</div>
<div class="t" style="left:1189px;top:1002px;font-size:12px;color:#4ea8dc">#shadow-root</div>
<!-- status bar -->
<div style="position:absolute;left:0;top:1px;font-size:12px;color:#bdbdbd">
<div class="t" style="left:1531px;top:1027px">行 12，列 1</div>
<div class="t" style="left:1610px;top:1027px">空格: 2</div>
<div class="t" style="left:1662px;top:1027px">UTF-8</div>
<div class="t" style="left:1709px;top:1027px">CRLF</div>
<div class="t" style="left:1752px;top:1027px">Markdown</div>
<div class="t" style="left:1824px;top:1027px">AI 助手 (Ctrl+I)</div>
</div>
<!-- php watermark -->
<div class="a" style="left:1834px;top:1027px;width:31px;height:18px;border-radius:50%;background:#e0242f;transform:rotate(-8deg)"></div>
<div class="t" style="left:1837px;top:1030px;font-size:12px;font-style:italic;font-weight:bold;color:#fff;letter-spacing:-0.3px">php</div>
<div class="t" style="left:1866px;top:1027px;font-size:16px;font-weight:bold;color:#1c1c1c;letter-spacing:-1px">中文网</div>

</body></html>
